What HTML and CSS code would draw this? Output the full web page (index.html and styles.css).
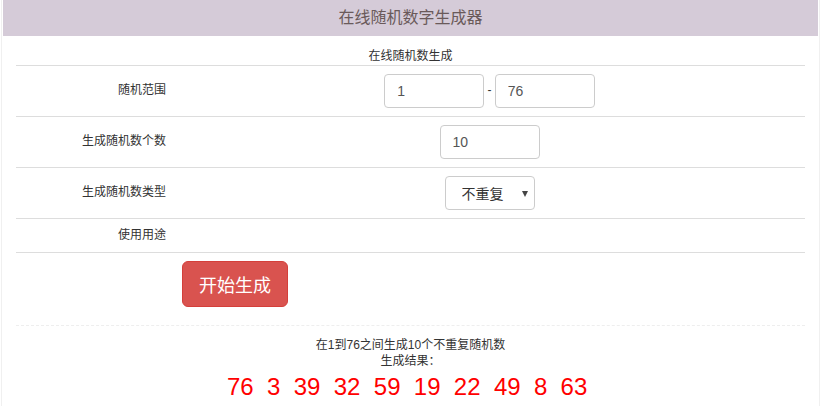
FILE: index.html
```html
<!DOCTYPE html>
<html lang="zh-CN">
<head>
<meta charset="utf-8">
<title>在线随机数字生成器</title>
<link rel="stylesheet" href="styles.css">
</head>
<body>
<div class="page">
  <div class="header">在线随机数字生成器</div>
  <div class="content">
    <table class="form-table">
      <caption>在线随机数生成</caption>
      <tbody>
        <tr>
          <th>随机范围</th>
          <td class="value"><input class="field" type="text" value="1"> - <input class="field" type="text" value="76"></td>
        </tr>
        <tr>
          <th>生成随机数个数</th>
          <td class="value"><input class="field" type="text" value="10"></td>
        </tr>
        <tr>
          <th>生成随机数类型</th>
          <td class="value"><span class="select-wrap"><select class="select"><option>不重复</option><option>可重复</option></select></span></td>
        </tr>
        <tr class="short">
          <th>使用用途</th>
          <td class="value"></td>
        </tr>
        <tr class="btn-row">
          <th></th>
          <td><button class="btn-start" type="button">开始生成</button></td>
        </tr>
      </tbody>
    </table>
    <div class="result">
      <div class="desc">在1到76之间生成10个不重复随机数</div>
      <div class="desc">生成结果：</div>
      <div class="numbers">76&nbsp; 3&nbsp; 39&nbsp; 32&nbsp; 59&nbsp; 19&nbsp; 22&nbsp; 49&nbsp; 8&nbsp; 63&nbsp;</div>
    </div>
  </div>
</div>
</body>
</html>
```
FILE: styles.css
```css
* { box-sizing: border-box; }
html, body { margin: 0; padding: 0; background: #fff; }
body {
  font-family: "Liberation Sans", "Noto Sans CJK SC", sans-serif;
  font-size: 12px;
  line-height: 1.42857;
  color: #333;
}
.page {
  margin: 0 1px;
  min-height: 406px;
  border-left: 1px solid #f0f0f0;
  border-right: 1px solid #f0f0f0;
}
.header {
  margin: 0 1px;
  height: 36px;
  background: #d5cbd8;
  color: #6a5a5a;
  font-size: 16px;
  line-height: 36px;
  text-align: center;
}
.content { margin: 0 14px; }
.form-table {
  width: 100%;
  border-collapse: collapse;
  border-spacing: 0;
}
.form-table caption {
  padding: 12px 0 0;
  height: 29px;
  text-align: center;
  color: #333;
}
.form-table th,
.form-table td {
  border-top: 1px solid #ddd;
  padding: 8px;
  vertical-align: middle;
}
.form-table th {
  width: 158px;
  text-align: right;
  font-weight: normal;
}
.form-table td.value { text-align: center; }
.form-table tr.short th,
.form-table tr.short td { height: 34px; }
.form-table tr.btn-row th,
.form-table tr.btn-row td { text-align: left; }
.field {
  width: 100px;
  height: 34px;
  padding: 6px 12px;
  border: 1px solid #ccc;
  border-radius: 4px;
  font-family: "Liberation Sans", "Noto Sans CJK SC", sans-serif;
  font-size: 14px;
  color: #555;
  vertical-align: middle;
  background: #fff;
}
.select-wrap {
  position: relative;
  display: inline-block;
  vertical-align: middle;
}
.select-wrap::after {
  content: "";
  position: absolute;
  right: 7px;
  top: 15px;
  border-left: 3.5px solid transparent;
  border-right: 3.5px solid transparent;
  border-top: 6px solid #444;
  pointer-events: none;
}
.select {
  appearance: none;
  -webkit-appearance: none;
  width: 90px;
  height: 34px;
  padding: 6px 16px;
  border: 1px solid #ccc;
  border-radius: 4px;
  background: #fff;
  font-family: "Noto Sans CJK SC", sans-serif;
  font-size: 14px;
  color: #333;
}
.btn-start {
  width: 106px;
  height: 46px;
  padding: 10px 16px;
  border: 1px solid #d43f3a;
  border-radius: 6px;
  background: #d9534f;
  color: #fff;
  font-family: "Noto Sans CJK SC", sans-serif;
  font-size: 18px;
  line-height: 24px;
}
.result {
  margin-top: 10px;
  border-top: 1px dashed #eee;
  padding-top: 11px;
  text-align: center;
}
.desc {
  line-height: 16px;
  color: #333;
}
.numbers {
  margin-top: 1px;
  font-size: 24px;
  line-height: 34px;
  color: #f00;
  white-space: pre;
}
```
